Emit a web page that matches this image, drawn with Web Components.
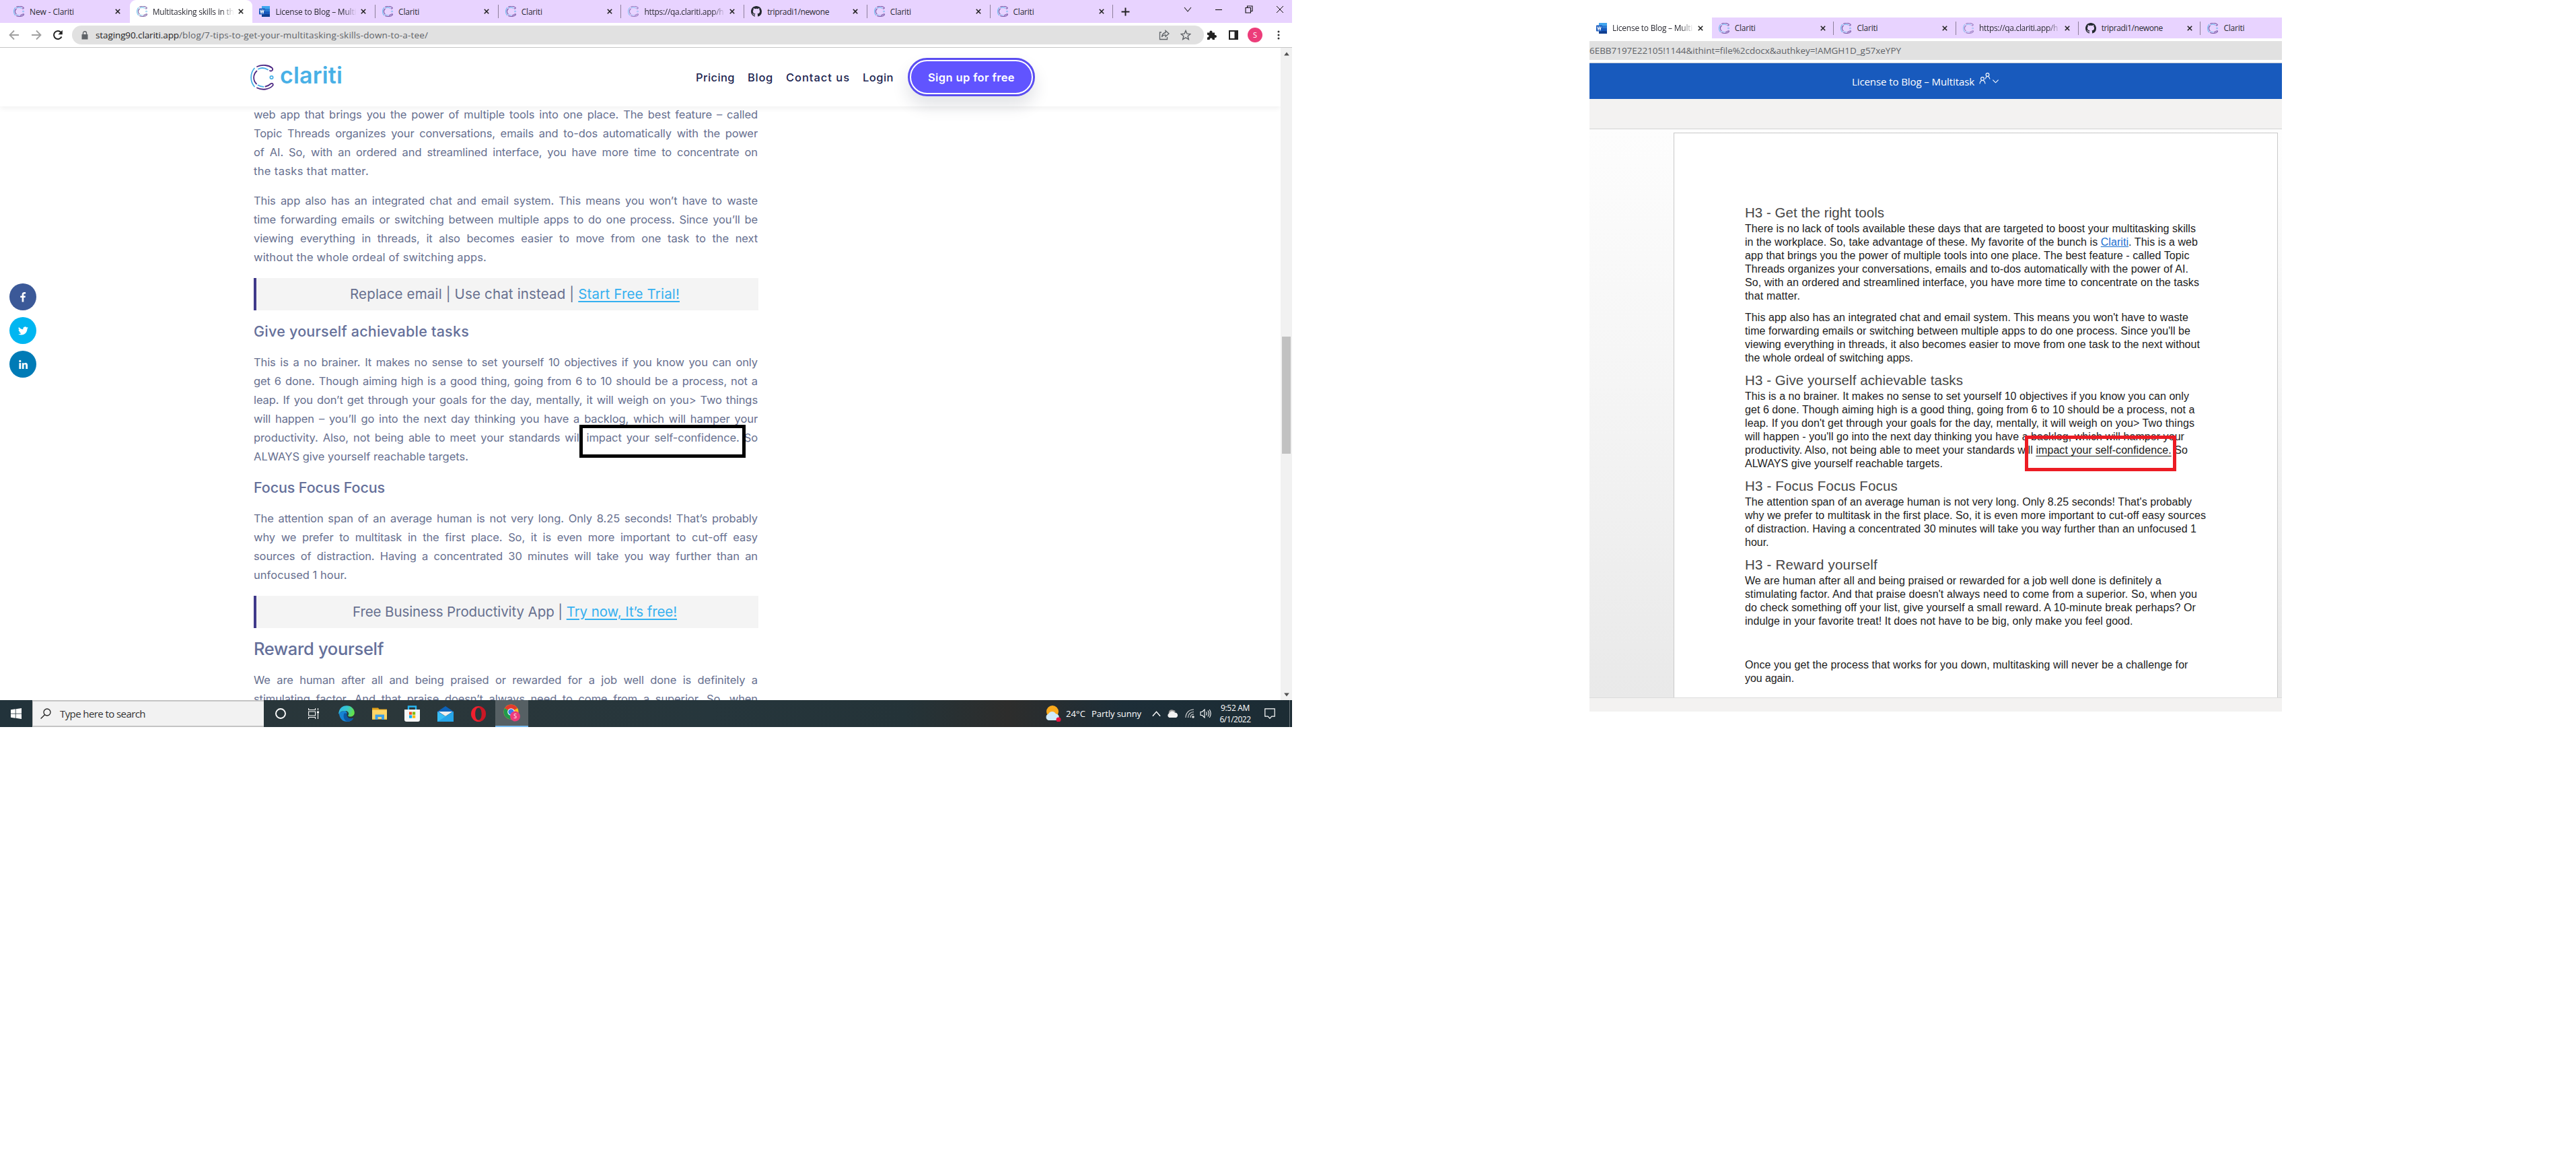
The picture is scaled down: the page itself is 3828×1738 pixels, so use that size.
<!DOCTYPE html>
<html lang="en">
<head>
<meta charset="utf-8">
<title>Multitasking skills review</title>
<style>
html,body{margin:0;padding:0;background:#fff}
body{width:3828px;height:1738px;overflow:hidden;font-family:"Open Sans","Liberation Sans",sans-serif;display:flex;align-items:flex-start}
word-window{margin:26px 0 0 442px}
</style>
</head>
<body>
<browser-window></browser-window>
<word-window></word-window>
<script>
const define = (name, css, html, after) => customElements.define(name, class extends HTMLElement {
  connectedCallback() {
    if (this.shadowRoot) return;
    const root = this.attachShadow({mode: 'open'});
    const body = typeof html === 'function' ? html(this) : html;
    root.innerHTML = '<style>*{box-sizing:border-box}' + css + '</style>' + body;
    if (after) after(this, root);
  }
});

const clariti = (o) => `<svg viewBox="0 0 35 38" preserveAspectRatio="none" opacity="${o}" fill="none" stroke-width="${o === 1 ? 1.8 : 2.6}" stroke-linecap="round">
<path stroke="#4e2a84" d="M10 3C18-.5 27 .5 32.500 5c2 3-1 5.500-3.500 4"/><path stroke="#4e2a84" d="M9.500 9.500C3.500 15 4 23.500 9 28.500"/><path stroke="#4e2a84" d="M10 34.500C18 38.500 28 37 33.500 31c1-3-1.500-4-4-2-2 2-4 3-7 3.500"/>
<path stroke="#45b0e6" d="M6 5.500C-.5 13-.5 25 6 32.500"/><path stroke="#45b0e6" d="M12 6.500C17 4 22 5 26 7.500M11.500 30.500c3 2 5 2.300 8 2.300"/><circle stroke="#45b0e6" cx="31.500" cy="19" r="2.200" stroke-width="1.700"/></svg>`;
const ICONS = {
  clariti: clariti(1), favicon: clariti(.7), faded: clariti(.5),
  word: `<svg viewBox="0 0 16 16"><rect x="4" width="12" height="16" rx="1" fill="#2b7cd3"/><path d="M4 0h12v4H4z" fill="#41a5ee"/><path d="M4 8h12v4H4z" fill="#185abd"/><path d="M4 12h12v4H4z" fill="#103f91"/><rect y="3.500" width="9" height="9" rx=".8" fill="#185abd"/><path d="M1.800 5.500l1.300 5L4.500 6l1.400 4.500 1.300-5" fill="none" stroke="#fff" stroke-width="1.100"/></svg>`,
  github: `<svg viewBox="0 0 16 16"><path fill="#24292f" d="M8 0C3.580 0 0 3.580 0 8c0 3.540 2.290 6.530 5.470 7.590.4.070.55-.17.55-.38 0-.19-.01-.82-.01-1.490-2.010.37-2.530-.49-2.690-.94-.09-.23-.48-.94-.82-1.130-.28-.15-.68-.52-.01-.53.63-.01 1.080.58 1.230.82.72 1.210 1.870.87 2.330.66.070-.52.28-.87.51-1.070-1.780-.2-3.640-.89-3.640-3.950 0-.87.31-1.590.82-2.150-.08-.2-.36-1.020.08-2.120 0 0 .67-.21 2.200.82a7.600 7.600 0 0 1 4 0c1.530-1.040 2.200-.82 2.200-.82.44 1.100.16 1.920.08 2.120.51.56.82 1.270.82 2.150 0 3.070-1.870 3.750-3.650 3.950.29.25.54.73.54 1.480 0 1.070-.01 1.930-.01 2.200 0 .21.15.46.55.38A8 8 0 0 0 16 8c0-4.420-3.580-8-8-8z"/></svg>`,
  close: `<svg viewBox="0 0 8 8"><path d="M.8.8l6.400 6.400M7.200.8L.8 7.200" stroke="#222" stroke-width="1.600"/></svg>`,
  plus: `<svg viewBox="0 0 12 12"><path d="M6 .5v11M.5 6h11" stroke="#222" stroke-width="1.800"/></svg>`,
  down: `<svg viewBox="0 0 12 12"><path d="M1 3l5 6 5-6" fill="none" stroke="#222" stroke-width="1.100"/></svg>`,
  min: `<svg viewBox="0 0 12 12"><path d="M1 6.500h10" stroke="#111" stroke-width="1.100"/></svg>`,
  restore: `<svg viewBox="0 0 12 12"><path d="M1 3.500h7.500V11H1zM3.500 3.500V1H11v7.500H8.500" fill="none" stroke="#111" stroke-width="1.100"/></svg>`,
  x: `<svg viewBox="0 0 12 12"><path d="M1 1l10 10M11 1L1 11" stroke="#111" stroke-width="1"/></svg>`,
  back: `<svg viewBox="0 0 16 16"><path d="M15 8H2M8 1.500L1.500 8 8 14.500" fill="none" stroke="#a0a0a0" stroke-width="1.800"/></svg>`,
  fwd: `<svg viewBox="0 0 16 16"><path d="M1 8h13M8 1.500L14.500 8 8 14.500" fill="none" stroke="#a0a0a0" stroke-width="1.800"/></svg>`,
  reload: `<svg viewBox="0 0 16 16"><path d="M13.500 10.500A6 6 0 1 1 12.500 4" fill="none" stroke="#222" stroke-width="2"/><path d="M14.800 .8v6.400H8.400z" fill="#222"/></svg>`,
  lock: `<svg viewBox="0 0 10 13"><path d="M.5 5h9v7.500h-9z" fill="#5f6368"/><path d="M2.500 5V3.200a2.500 2.500 0 0 1 5 0V5" fill="none" stroke="#5f6368" stroke-width="1.400"/></svg>`,
  share: `<svg viewBox="0 0 16 16" fill="none" stroke="#5f6368" stroke-width="1.300"><path d="M4 4H1.500v10.500h11V11"/><path d="M10 1.500L15 6l-5 4.300V7.800C7.500 7.800 5.500 9 4.500 11c.3-3.500 2.500-6 5.500-6.500z"/></svg>`,
  star: `<svg viewBox="0 0 16 16"><path d="M8 1.500l1.900 4.600 4.900.4-3.700 3.200 1.200 4.800L8 11.900l-4.300 2.600 1.200-4.800L1.200 6.500l4.900-.4z" fill="none" stroke="#5f6368" stroke-width="1.400"/></svg>`,
  puzzle: `<svg viewBox="0 0 16 16"><path fill="#222" d="M1 4.500h3.500c-.8-4 4.800-4 4 0H12V8c4-.8 4 4.800 0 4v3H8.700c.4-3.500-4.400-3.500-4 0H1v-3.600c3.300.4 3.300-4 0-3.600z"/></svg>`,
  side: `<svg viewBox="0 0 14 14"><path d="M1 1h12v12H1z" fill="#fff" stroke="#222" stroke-width="2"/><path d="M8.500 1H13v12H8.500z" fill="#222"/></svg>`,
  dots: `<svg viewBox="0 0 4 14" fill="#333"><circle cx="2" cy="2" r="1.500"/><circle cx="2" cy="7" r="1.500"/><circle cx="2" cy="12" r="1.500"/></svg>`,
  fb: `<svg viewBox="0 0 16 16"><path fill="#fff" d="M9.300 15.500V9H11.500l.4-2.600H9.300V5c0-.9.300-1.400 1.400-1.400h1.400V1.100C11.700 1 11 .9 10.200.9 8 .9 6.600 2.200 6.600 4.600v1.800H4.200V9h2.400v6.500z"/></svg>`,
  tw: `<svg viewBox="0 0 24 24"><path fill="#fff" d="M23.950 4.570a10 10 0 0 1-2.820.77 4.960 4.960 0 0 0 2.160-2.720c-.95.55-2 .95-3.130 1.180a4.920 4.920 0 0 0-8.380 4.480C7.690 8.090 4.070 6.130 1.640 3.160a4.920 4.920 0 0 0 1.520 6.570 4.900 4.900 0 0 1-2.230-.61v.06c0 2.380 1.700 4.370 3.950 4.820a5 5 0 0 1-2.210.09 4.940 4.940 0 0 0 4.600 3.420A9.870 9.870 0 0 1 0 19.540a13.990 13.990 0 0 0 7.550 2.210c9.050 0 14-7.500 14-13.980l-.02-.64a9.940 9.940 0 0 0 2.420-2.560z"/></svg>`,
  li: `<svg viewBox="0 0 16 16" fill="#fff"><path d="M1.500 5.500h3V15h-3z"/><circle cx="3" cy="2.600" r="1.700"/><path d="M6.200 5.500H9v1.300c.5-.9 1.500-1.500 2.800-1.500 2.500 0 3.200 1.600 3.200 4V15h-3v-5c0-1.300-.3-2.200-1.400-2.200-1.200 0-1.500 1-1.500 2.200v5H6.200z"/></svg>`,
  win: `<svg viewBox="0 0 16 16" fill="#fff"><path d="M0 2.300l6.800-1v6.400H0zM7.600 1.200L16 0v7.700H7.600zM0 8.400h6.800v6.400l-6.800-1zM7.600 8.400H16V16l-8.400-1.200z"/></svg>`,
  search: `<svg viewBox="0 0 16 16"><circle cx="10" cy="6" r="5" fill="none" stroke="#222" stroke-width="1.300"/><path d="M6.500 9.800L.6 15.500" stroke="#222" stroke-width="1.300"/></svg>`,
  cortana: `<svg viewBox="0 0 16 16"><circle cx="8" cy="8" r="7" fill="none" stroke="#fff" stroke-width="1.900"/></svg>`,
  tasks: `<svg viewBox="0 0 16 16" fill="none" stroke="#fff" stroke-width="1.100"><path d="M.6 0v2.500h10V0M.6 16v-2.500h10V16M.6 5h10v6H.6zM14.500 0v3M14.500 8v8"/><path d="M13 4.500h3v3h-3z" fill="#fff" stroke="none"/></svg>`,
  edge: `<svg viewBox="0 0 24 24"><defs><linearGradient id="e1" x1="0" x2="1" y1="0" y2=".3"><stop offset="0" stop-color="#2ab6e8"/><stop offset=".55" stop-color="#37c6d0"/><stop offset="1" stop-color="#62e14d"/></linearGradient></defs><path fill="#1684d3" d="M.5 10.500C1.500 16 3 24 13 24c4 0 7.500-2 9-5-9 3-12-4-9-8L10 7.500z"/><path fill="#0c59a4" d="M8.500 11.500C6 17 9 24 14.500 23.800c3.500-.2 6.500-2.300 7.800-5-4.500 1.700-9.300 0-9.800-4.300l-.2-3z"/><path fill="url(#e1)" d="M.3 11C1 4.500 5.500.2 12 .2c7 0 11.800 5 11.800 10.300 0 4-3 6-6.300 6-2.500 0-3.500-1-3.300-1.700.2-.6 1-1.200 1-2.600 0-2-2-4.200-5.500-4.200C5 8 1.500 9.500.3 13z"/></svg>`,
  folder: `<svg viewBox="0 0 22 18"><path fill="#e2a11a" d="M0 .5h9l1.500 2H22V6H0z"/><path fill="#ffd666" d="M0 3.500h22v14H0z"/><path fill="#3c9fe8" d="M4.500 10.500h13.500v7.500h-4v-4H8.500v4h-4z"/><path fill="#e9b93b" d="M0 16.800h4.500V18H0zM18 16.800h4V18h-4z"/></svg>`,
  store: `<svg viewBox="0 0 23 24"><path d="M6 7V1.500h11V7" fill="none" stroke="#28b5f0" stroke-width="2.400"/><path d="M0 6h23v15q0 3-3 3H3q-3 0-3-3z" fill="#f6f6f6"/><path fill="#f1511b" d="M7 9.500h4.200v4.200H7z"/><path fill="#80bc06" d="M12 9.500h4.200v4.200H12z"/><path fill="#00adef" d="M7 14.500h4.200v4.200H7z"/><path fill="#fbbc09" d="M12 14.500h4.200v4.200H12z"/></svg>`,
  mail: `<svg viewBox="0 0 24 23"><path fill="#0d62b8" d="M0 8L12 0l12 8v4H0z"/><path fill="#eee" d="M1.500 8h21L12 15z"/><path fill="#37bdf5" d="M0 8l12 7L24 8v15H0z"/><path fill="#1a92df" d="M0 23L24 8v15z" opacity=".55"/></svg>`,
  opera: `<svg viewBox="0 0 22 23"><path fill="#f0202e" fill-rule="evenodd" d="M11 0a11 11.500 0 1 0 0 23 11 11.500 0 0 0 0-23zm0 2.300c3 0 4.800 4 4.800 9.200s-1.800 9.200-4.800 9.200-4.800-4-4.800-9.200S8 2.300 11 2.300z"/><path fill="#a3101c" d="M11 2.300c2-2.300 5-1.500 7 0a11 11.500 0 0 1 0 18.400c-2 1.500-5 2.300-7 0 3 0 4.800-4 4.800-9.200S14 2.300 11 2.300z" opacity=".5"/></svg>`,
  chrome: `<svg viewBox="0 0 25 26"><circle cx="11.500" cy="11.500" r="11" fill="#fbc116"/><path fill="#e33b2e" d="M11.500 11.500L2 6A11 11 0 0 1 21 6z"/><path fill="#21994a" d="M11.500 11.500L2 6a11 11 0 0 0 9 16.500z"/><circle cx="11.500" cy="11.500" r="5.300" fill="#fff"/><circle cx="11.500" cy="11.500" r="4.200" fill="#3b7ded"/><circle cx="17.500" cy="18" r="7.500" fill="#ec3d7a"/><text x="17.500" y="21" font-size="8.500" fill="#fff" text-anchor="middle" font-family="Open Sans">S</text></svg>`,
  weather: `<svg viewBox="0 0 24 24"><circle cx="11" cy="9" r="9" fill="#f9a91c"/><path d="M5 22a5 5 0 0 1 0-9.500 6 6 0 0 1 11 0A5 5 0 0 1 18 22z" fill="#cfeafc"/><circle cx="20" cy="21" r="3.500" fill="#e8113f"/></svg>`,
  up: `<svg viewBox="0 0 12 12"><path d="M.8 9L6 3l5.200 6" fill="none" stroke="#fff" stroke-width="1.300"/></svg>`,
  cloud: `<svg viewBox="0 0 17 12"><path d="M4 7a5 5 0 0 1 9-4" fill="#999"/><circle cx="7" cy="4.500" r="4.300" fill="#9b9b9b"/><path d="M3.500 12a3.500 3.500 0 0 1 0-6.500 5 5 0 0 1 8.500-1 4 4 0 0 1 2 7.500z" fill="#f2f2f2"/></svg>`,
  wifi: `<svg viewBox="0 0 14 14" fill="none" stroke="#ddd" stroke-width="1.200"><path d="M1 13C1 6 6 1 13 1M4.500 13C4.500 8 8 4.500 13 4.500M8 13c0-3 2-5 5-5"/><circle cx="12" cy="12" r="1.200" fill="#fff"/></svg>`,
  sound: `<svg viewBox="0 0 17 14" fill="none" stroke="#fff" stroke-width="1.100"><path d="M1 4.500h2.500L7 1v12L3.500 9.500H1zM9.500 4.500q1.500 2.500 0 5M12 2.500q3 4.500 0 9M14.300 1q3.800 6 0 12"/></svg>`,
  note: `<svg viewBox="0 0 16 16"><path d="M.8.8h14.400v11.400h-4.400L8 15.200l-2.800-3H.8z" fill="none" stroke="#fff" stroke-width="1.200"/></svg>`,
  people: `<svg viewBox="0 0 17 17" fill="none" stroke="#fff" stroke-width="1.100"><circle cx="5.500" cy="9" r="2.400"/><path d="M1.500 16.500q.5-5 4-5t4 5"/><circle cx="13" cy="3" r="2.400"/><path d="M10 9.500q.5-4 3-4t3.500 4"/></svg>`,
  chev: `<svg viewBox="0 0 12 12"><path d="M1.500 4L6 8.500 10.500 4" fill="none" stroke="#fff" stroke-width="1.200"/></svg>`,
  tri: `<svg viewBox="0 0 8 8"><path d="M4 1.500L7.800 6.500H.2z" fill="#505050"/></svg>`,
  trid: `<svg viewBox="0 0 8 8"><path d="M4 6.500L7.800 1.500H.2z" fill="#505050"/></svg>`
};

/* ui-icon: name + w/h box */
define('ui-icon', ':host{display:block;flex:none}svg{display:block;width:100%;height:100%}',
  el => ICONS[el.getAttribute('name')],
  el => { el.style.width = el.getAttribute('w') + 'px'; el.style.height = (el.getAttribute('h') || el.getAttribute('w')) + 'px'; });

/* fit-text: one line set to an exact measure; with ls, tracking is fixed and the word gaps absorb the rest */
define('fit-text', ':host{display:block;white-space:nowrap;width:max-content;flex:none}', '<slot></slot>', el => {
  const w = +el.getAttribute('w'), ls = el.getAttribute('ls'), t = el.textContent;
  if (ls !== null) el.style.letterSpacing = ls + 'px';
  const d = w - el.getBoundingClientRect().width;
  if (ls !== null) el.style.wordSpacing = d / (t.split(' ').length - 1) + 'px';
  else el.style.letterSpacing = d / t.length + 'px';
});

define('browser-tab', `:host{display:flex;align-items:center;width:182.700px;height:100%;padding-left:10px;flex:none;border-radius:9px 9px 0 0;font-size:12px;color:#2b2b33}
:host([active]){background:#fff}
ui-icon{margin-right:8px}.t{width:121px;overflow:hidden;white-space:nowrap}:host([long]) .t{-webkit-mask-image:linear-gradient(90deg,#000 84%,transparent)}.c{margin-left:6px}.sep{width:1px;height:20px;background:#8d7f9b;margin-left:auto}
:host([nosep]) .sep{display:none}`,
  el => `<ui-icon name="${el.getAttribute('icon')}" w="16"></ui-icon><div class="t"><fit-text w="${el.getAttribute('w')}">${el.getAttribute('label')}</fit-text></div><ui-icon class="c" name="close" w="8"></ui-icon><span class="sep"></span>`);

define('site-header', `:host{display:flex;align-items:center;height:87px;background:#fff;box-shadow:0 3px 8px rgba(0,0,0,.06);position:relative;z-index:2;padding-left:372px;font:500 16.500px Inter,sans-serif;color:#1b2450}
.name{font:600 34px/40px Inter,sans-serif;color:#48b0e6;margin-left:9px;margin-top:-6px}
nav{display:flex;align-items:center;margin-left:525px;gap:19px}
.b{display:flex;align-items:center;justify-content:center;width:189px;height:57px;margin-left:2px;border-radius:29px;background:#6154ff;border:3px solid #5a4df0;box-shadow:0 14px 24px rgba(30,40,60,.13);padding:0}
.b div{display:flex;align-items:center;justify-content:center;width:183px;height:51px;border-radius:26px;border:2px solid #fff;color:#fff;font-weight:600}`,
  `<ui-icon name="clariti" w="35" h="38"></ui-icon><fit-text class="name" w="93">clariti</fit-text>
<nav><fit-text w="58">Pricing</fit-text><fit-text w="38">Blog</fit-text><fit-text w="95">Contact us</fit-text><fit-text w="46">Login</fit-text><div class="b"><div><fit-text w="129">Sign up for free</fit-text></div></div></nav>`);

define('share-rail', `:host{display:flex;flex-direction:column;gap:10px;width:377px;flex:none;padding:263px 0 0 14px}
div{width:40px;height:40px;border-radius:50%;display:flex;align-items:center;justify-content:center}`,
  `<div style="background:#3b5998"><ui-icon name="fb" w="16"></ui-icon></div><div style="background:#00b6f1"><ui-icon name="tw" w="15"></ui-icon></div><div style="background:#007bb6"><ui-icon name="li" w="15"></ui-icon></div>`);

define('cta-banner', ':host{display:flex;align-items:center;justify-content:center;height:48px;background:#f4f4f4;border-left:4px solid #403a8a;padding-left:22px;font-size:20.500px}', '<slot></slot>');

const LS = '-.1';
const para = (top, lines) => `<div style="margin-top:${top}px">` + lines.map(([w, t]) => `<fit-text w="${w}"${w === 749 ? ` ls="${LS}"` : ''}>${t}</fit-text>`).join('') + '</div>';
define('blog-article', `:host{display:block;width:750px;flex:none;font:400 16.500px/28px Inter,sans-serif;color:#67708f}
.h{font-size:21.500px;line-height:30px;font-weight:450;color:#65709a}.h2{font-size:25.500px;line-height:36px}
a{color:#35b0f0;text-decoration:underline;text-underline-offset:3px}`,
  para(-2, [[749, 'web app that brings you the power of multiple tools into one place. The best feature – called'],
    [749, 'Topic Threads organizes your conversations, emails and to-dos automatically with the power'],
    [749, 'of AI. So, with an ordered and streamlined interface, you have more time to concentrate on'],
    [171, 'the tasks that matter.']]) +
  para(16, [[749, 'This app also has an integrated chat and email system. This means you won’t have to waste'],
    [749, 'time forwarding emails or switching between multiple apps to do one process. Since you’ll be'],
    [749, 'viewing everything in threads, it also becomes easier to move from one task to the next'],
    [346, 'without the whole ordeal of switching apps.']]) +
  `<cta-banner style="margin-top:17px"><fit-text w="490">Replace email | Use chat instead | <a>Start Free Trial!</a></fit-text></cta-banner>
<fit-text class="h" style="margin-top:16px" w="320">Give yourself achievable tasks</fit-text>` +
  para(17, [[749, 'This is a no brainer. It makes no sense to set yourself 10 objectives if you know you can only'],
    [749, 'get 6 done. Though aiming high is a good thing, going from 6 to 10 should be a process, not a'],
    [749, 'leap. If you don’t get through your goals for the day, mentally, it will weigh on you&gt; Two things'],
    [749, 'will happen – you’ll go into the next day thinking you have a backlog, which will hamper your'],
    [749, 'productivity. Also, not being able to meet your standards will impact your self-confidence. So'],
    [319, 'ALWAYS give yourself reachable targets.']]) +
  `<fit-text class="h" style="margin-top:17px" w="195">Focus Focus Focus</fit-text>` +
  para(17, [[749, 'The attention span of an average human is not very long. Only 8.25 seconds! That’s probably'],
    [749, 'why we prefer to multitask in the first place. So, it is even more important to cut-off easy'],
    [749, 'sources of distraction. Having a concentrated 30 minutes will take you way further than an'],
    [138.5, 'unfocused 1 hour.']]) +
  `<cta-banner style="margin-top:17px"><fit-text w="482">Free Business Productivity App | <a>Try now, It’s free!</a></fit-text></cta-banner>
<fit-text class="h h2" style="margin-top:13px" w="193">Reward yourself</fit-text>` +
  para(14, [[749, 'We are human after all and being praised or rewarded for a job well done is definitely a'],
    [749, 'stimulating factor. And that praise doesn’t always need to come from a superior. So, when']]));

define('task-bar', `:host{display:flex;align-items:center;height:40px;background:linear-gradient(90deg,#22333b,#2b373a 30%,#26363c 55%,#243338 70%,#2d2d2c 78%,#1d2e38 87%,#1c2c34);color:#fff;font-size:13px;padding-left:16px}
.s{display:flex;align-items:center;width:344px;height:40px;background:#f2f2f2;border:2px solid #c4c4c4;border-width:2px 0 2px 1px;margin-left:16px;padding-left:11px;gap:13px;color:#333;font-size:15px}
.a{width:49.100px;height:40px;display:flex;align-items:center;justify-content:center;flex:none}
.on{background:#566064;border-bottom:2px solid #76b9ed}
.time{display:flex;flex-direction:column;align-items:center;gap:0;font-size:12px;line-height:17px;width:47px}
.sp{flex:1}.end{width:1px;height:40px;background:#6d777c;margin:0 3px 0 21px}`,
  `<ui-icon name="win" w="16"></ui-icon><div class="s"><ui-icon name="search" w="16"></ui-icon><fit-text w="127">Type here to search</fit-text></div>` +
  [['cortana', 16, 16], ['tasks', 16, 16], ['edge', 24, 24], ['folder', 22, 18], ['store', 23, 24], ['mail', 24, 23], ['opera', 22, 23], ['chrome', 25, 26]].map(([n, w, h]) => `<div class="a ${n === 'chrome' ? 'on' : ''}"><ui-icon name="${n}" w="${w}" h="${h}"></ui-icon></div>`).join('') +
  `<span class="sp"></span><ui-icon name="weather" w="24"></ui-icon><fit-text w="29" style="margin-left:7px">24°C</fit-text><fit-text w="74" style="margin-left:9px">Partly sunny</fit-text>
<ui-icon name="up" w="13" style="margin-left:16px"></ui-icon><ui-icon name="cloud" w="17" h="12" style="margin-left:9px"></ui-icon><ui-icon name="wifi" w="14" style="margin-left:10px"></ui-icon><ui-icon name="sound" w="17" h="14" style="margin-left:8px"></ui-icon>
<div class="time" style="margin-left:12px"><fit-text w="43">9:52 AM</fit-text><fit-text w="46">6/1/2022</fit-text></div><ui-icon name="note" w="16" style="margin-left:20px"></ui-icon><span class="end"></span>`);

define('browser-window', `:host{display:flex;flex-direction:column;width:1920px;height:1080px;overflow:hidden;position:relative;flex:none;background:#fff}
.tabs{display:flex;height:34px;background:#e8d3ff;padding-left:10px;align-items:center;flex:none}
.wc{display:flex;gap:33.500px;margin-left:80px;margin-top:-6px}
.bar{display:flex;align-items:center;height:37px;padding:0 18px 0 13px;border-bottom:1px solid #c6c6c6;flex:none}
.pill{display:flex;align-items:center;height:28px;width:1682px;border-radius:14px;background:#e1e1e1;margin-left:13px;padding:0 19px 0 14px;font-size:13.500px;color:#5f6368}
.pill b{font-weight:400;color:#1f1f1f}
.av{width:22px;height:22px;border-radius:50%;background:#ec3d7a;color:#fff;font-size:11px;line-height:22px;text-align:center;margin:0 22px 0 14px}
.view{display:flex;flex:1;min-height:0}.page{width:1903px;overflow:hidden;display:flex;flex-direction:column}
.main{display:flex;min-height:0;flex:1;overflow:hidden}
.sb{width:17px;background:#f1f1f1;display:flex;flex-direction:column;align-items:center;padding:5px 0 4px}
.th{width:13px;height:174px;background:#c1c1c1;margin-top:416px;margin-bottom:auto}
.mark{position:absolute;left:861px;top:631px;width:247px;height:49px;border:5px solid #000}`,
  `<div class="tabs"><browser-tab icon="favicon" label="New - Clariti" w="66" nosep></browser-tab><browser-tab icon="favicon" label="Multitasking skills in th" w="121" active long nosep></browser-tab><browser-tab icon="word" label="License to Blog – Multi" w="120" long></browser-tab><browser-tab icon="favicon" label="Clariti" w="31"></browser-tab><browser-tab icon="favicon" label="Clariti" w="31"></browser-tab><browser-tab icon="faded" label="https://qa.clariti.app/h" w="118" long></browser-tab><browser-tab icon="github" label="tripradi1/newone" w="92"></browser-tab><browser-tab icon="favicon" label="Clariti" w="31"></browser-tab><browser-tab icon="favicon" label="Clariti" w="31"></browser-tab>
<ui-icon name="plus" w="13" style="margin-left:12px"></ui-icon><div class="wc"><ui-icon name="down" w="12"></ui-icon><ui-icon name="min" w="12"></ui-icon><ui-icon name="restore" w="12"></ui-icon><ui-icon name="x" w="12"></ui-icon></div></div>
<div class="bar"><ui-icon name="back" w="16"></ui-icon><ui-icon name="fwd" w="16" style="margin-left:17px"></ui-icon><ui-icon name="reload" w="16" style="margin-left:16px"></ui-icon>
<div class="pill"><ui-icon name="lock" w="10" h="13"></ui-icon><fit-text w="124" style="margin-left:11px"><b>staging90.clariti.app</b></fit-text><fit-text w="370">/blog/7-tips-to-get-your-multitasking-skills-down-to-a-tee/</fit-text><ui-icon name="share" w="16" style="margin-left:auto"></ui-icon><ui-icon name="star" w="16" style="margin-left:16px"></ui-icon></div>
<ui-icon name="puzzle" w="16" style="margin-left:4.500px"></ui-icon><ui-icon name="side" w="14" style="margin-left:17px"></ui-icon><div class="av">S</div><ui-icon name="dots" w="4" h="14"></ui-icon></div>
<div class="view"><div class="page"><site-header></site-header><div class="main"><share-rail></share-rail><blog-article></blog-article></div></div>
<div class="sb"><ui-icon name="tri" w="8"></ui-icon><div class="th"></div><ui-icon name="trid" w="8"></ui-icon></div></div>
<task-bar></task-bar><div class="mark"></div>`);

const doc = [
  ['h', 207, 'H3 - Get the right tools'], [670, 'There is no lack of tools available these days that are targeted to boost your multitasking skills'], [673, 'in the workplace. So, take advantage of these. My favorite of the bunch is <a>Clariti</a>. This is a web'], [660.500, 'app that brings you the power of multiple tools into one place. The best feature - called Topic'], [659, 'Threads organizes your conversations, emails and to-dos automatically with the power of AI.'], [675, 'So, with an ordered and streamlined interface, you have more time to concentrate on the tasks'], [82, 'that matter.'], ['g', 12],
  [659, 'This app also has an integrated chat and email system. This means you won\'t have to waste'], [662, 'time forwarding emails or switching between multiple apps to do one process. Since you\'ll be'], [676, 'viewing everything in threads, it also becomes easier to move from one task to the next without'], [250, 'the whole ordeal of switching apps.'], ['g', 12],
  ['h', 324, 'H3 - Give yourself achievable tasks'], [660, 'This is a no brainer. It makes no sense to set yourself 10 objectives if you know you can only'], [668.500, 'get 6 done. Though aiming high is a good thing, going from 6 to 10 should be a process, not a'], [668, 'leap. If you don\'t get through your goals for the day, mentally, it will weigh on you&gt; Two things'], [653, 'will happen - you\'ll go into the next day thinking you have a backlog, which will hamper your'], [658, 'productivity. Also, not being able to meet your standards will <u>impact your self-confidence.</u> So'], [294, 'ALWAYS give yourself reachable targets.'], ['g', 12],
  ['h', 227, 'H3 - Focus Focus Focus'], [664, 'The attention span of an average human is not very long. Only 8.25 seconds! That\'s probably'], [685, 'why we prefer to multitask in the first place. So, it is even more important to cut-off easy sources'], [671, 'of distraction. Having a concentrated 30 minutes will take you way further than an unfocused 1'], [35.500, 'hour.'], ['g', 12],
  ['h', 197, 'H3 - Reward yourself'], [619, 'We are human after all and being praised or rewarded for a job well done is definitely a'], [672, 'stimulating factor. And that praise doesn\'t always need to come from a superior. So, when you'], [670, 'do check something off your list, give yourself a small reward. A 10-minute break perhaps? Or'], [576.500, 'indulge in your favorite treat! It does not have to be big, only make you feel good.'], ['g', 45],
  [658.500, 'Once you get the process that works for you down, multitasking will never be a challenge for'], [73, 'you again.']];
define('word-window', `:host{display:flex;flex-direction:column;width:1029px;height:1031px;overflow:hidden;position:relative;flex:none;background:#fff}
.tabs{display:flex;height:31px;background:#e8d3ff;align-items:center;flex:none;overflow:hidden}
browser-tab{border-radius:0;width:181.700px}
.url{margin-top:4px;height:28px;background:#e1e1e1;display:flex;align-items:center;font-size:13.500px;color:#5f6368;flex:none}
.top{margin-top:4px;border-top:1px solid #b9c4d2;height:54px;background:#185abd;color:#fff;display:flex;align-items:center;padding-left:390px;font-size:15px;flex:none}
.rib{height:45px;background:#f3f2f1;border-bottom:1px solid #d4d4d4;flex:none}
.cv{flex:1;min-height:0;display:flex;background:linear-gradient(#fdfdfd,#f5f5f5 45%,#e9e9e9);padding:5px 0 0 125px}
.pg{width:898px;background:#fff;border:1px solid #c9c9c9;border-bottom:0;padding:107px 0 0 105px;font:16px/20px "Liberation Sans",sans-serif;color:#1c1c1c}
.h{font-size:20.500px;line-height:22px;padding-bottom:3px;color:#474747}
a{color:#1b6fd0;text-decoration:underline}u{text-underline-offset:3px}
.ft{height:21px;background:#f3f2f1;border-top:1px solid #dcdcdc;flex:none}
.mark{position:absolute;left:647px;top:621px;width:225px;height:53px;border:5px solid #ec1c24}`,
  `<div class="tabs"><browser-tab icon="word" label="License to Blog – Multi" w="119" active long nosep></browser-tab><browser-tab icon="favicon" label="Clariti" w="31"></browser-tab><browser-tab icon="favicon" label="Clariti" w="31"></browser-tab><browser-tab icon="faded" label="https://qa.clariti.app/h" w="117" long></browser-tab><browser-tab icon="github" label="tripradi1/newone" w="91"></browser-tab><browser-tab icon="favicon" label="Clariti" w="31"></browser-tab></div>
<div class="url"><fit-text w="463">6EBB7197E22105!1144&amp;ithint=file%2cdocx&amp;authkey=!AMGH1D_g57xeYPY</fit-text></div>
<div class="top"><fit-text w="182">License to Blog – Multitask</fit-text><ui-icon name="people" w="18" h="17" style="margin:-8px 0 0 6px"></ui-icon><ui-icon name="chev" w="11" style="margin-left:2px"></ui-icon></div>
<div class="rib"></div><div class="cv"><div class="pg">` +
  doc.map(r => r[0] === 'h' ? `<fit-text class="h" w="${r[1]}">${r[2]}</fit-text>` : r[0] === 'g' ? `<div style="height:${r[1]}px"></div>` : `<fit-text w="${r[0]}">${r[1]}</fit-text>`).join('') +
  `</div></div><div class="ft"></div><div class="mark"></div>`);
</script>
</body>
</html>
